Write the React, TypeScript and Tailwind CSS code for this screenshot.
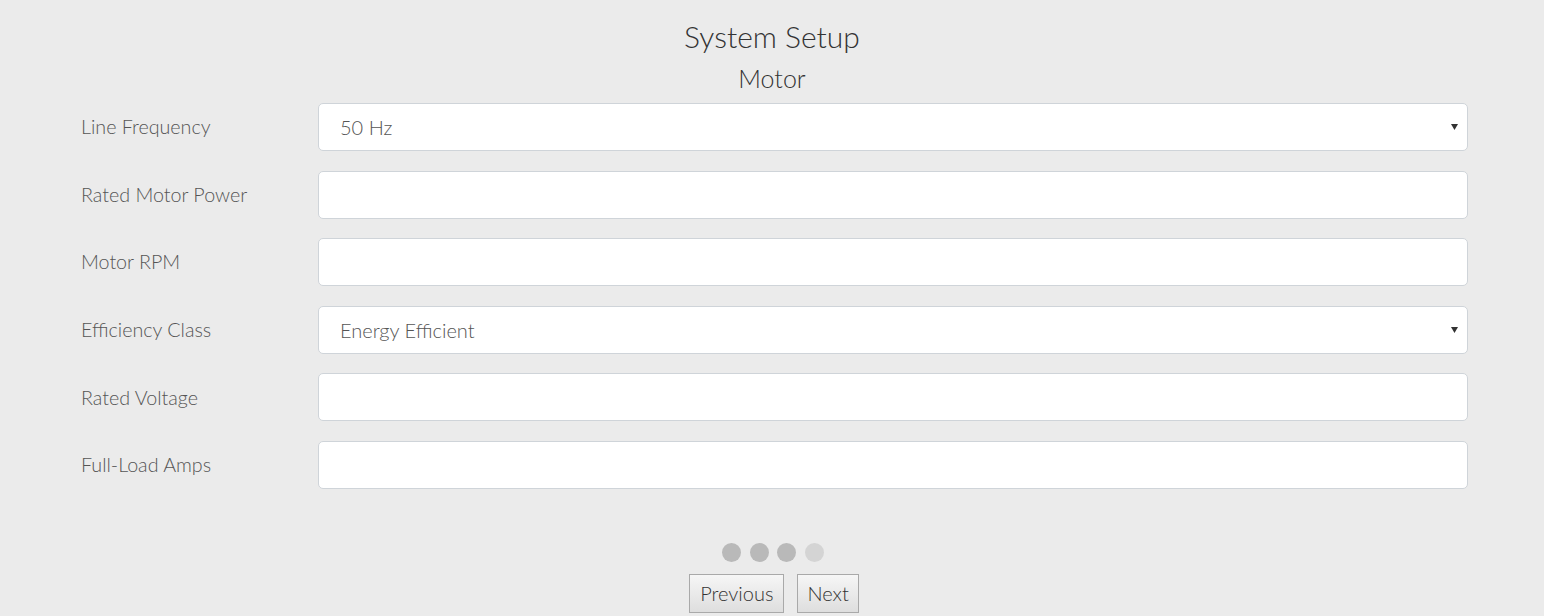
const rows: { label: string; kind: 'select' | 'input'; value?: string }[] = [
  { label: 'Line Frequency', kind: 'select', value: '50 Hz' },
  { label: 'Rated Motor Power', kind: 'input' },
  { label: 'Motor RPM', kind: 'input' },
  { label: 'Efficiency Class', kind: 'select', value: 'Energy Efficient' },
  { label: 'Rated Voltage', kind: 'input' },
  { label: 'Full-Load Amps', kind: 'input' },
];

function Field({ kind, value }: { kind: 'select' | 'input'; value?: string }) {
  return (
    <div className="relative flex-1 h-[48px] bg-white border border-[#cfd4d9] rounded-[5px] flex items-center pl-[21px] pr-[9px]">
      {kind === 'select' && (
        <>
          <span className="flex-1 text-[20px] font-light text-[#555]">{value}</span>
          <svg width="7" height="6" viewBox="0 0 7 6">
            <path d="M0 0h7L3.5 6z" fill="#333" />
          </svg>
        </>
      )}
    </div>
  );
}

export default function App() {
  return (
    <div className="min-h-screen bg-[#ebebeb] font-['Lato',sans-serif] text-[#555] pt-[18px]">
      <h1 className="text-center text-[30px] leading-[36px] font-light text-[#333]">System Setup</h1>
      <h2 className="text-center text-[25px] leading-[30px] font-light text-[#333] mt-[9px]">Motor</h2>
      <div className="pl-[81px] pr-[76px] mt-[10px] flex flex-col gap-[19.6px]">
        {rows.map((r) => (
          <div key={r.label} className="flex items-center">
            <label className="w-[237px] text-[19.7px] font-light text-[#555]">{r.label}</label>
            <Field kind={r.kind} value={r.value} />
          </div>
        ))}
      </div>
      <div className="flex justify-center gap-[8.5px] mt-[54px] pl-[2px]">
        <span className="w-[19px] h-[19px] rounded-full bg-[#b9b9b9]" />
        <span className="w-[19px] h-[19px] rounded-full bg-[#b9b9b9]" />
        <span className="w-[19px] h-[19px] rounded-full bg-[#b9b9b9]" />
        <span className="w-[19px] h-[19px] rounded-full bg-[#d4d4d4]" />
      </div>
      <div className="flex justify-center gap-[13px] mt-[12px] pl-[4px]">
        <button className="h-[39px] px-[10px] text-[20px] text-[#333] font-light border border-[#a9a9a9] bg-gradient-to-b from-[#f6f6f6] to-[#dedede]">Previous</button>
        <button className="h-[39px] px-[9px] text-[20px] text-[#333] font-light border border-[#a9a9a9] bg-gradient-to-b from-[#f6f6f6] to-[#dedede]">Next</button>
      </div>
    </div>
  );
}
